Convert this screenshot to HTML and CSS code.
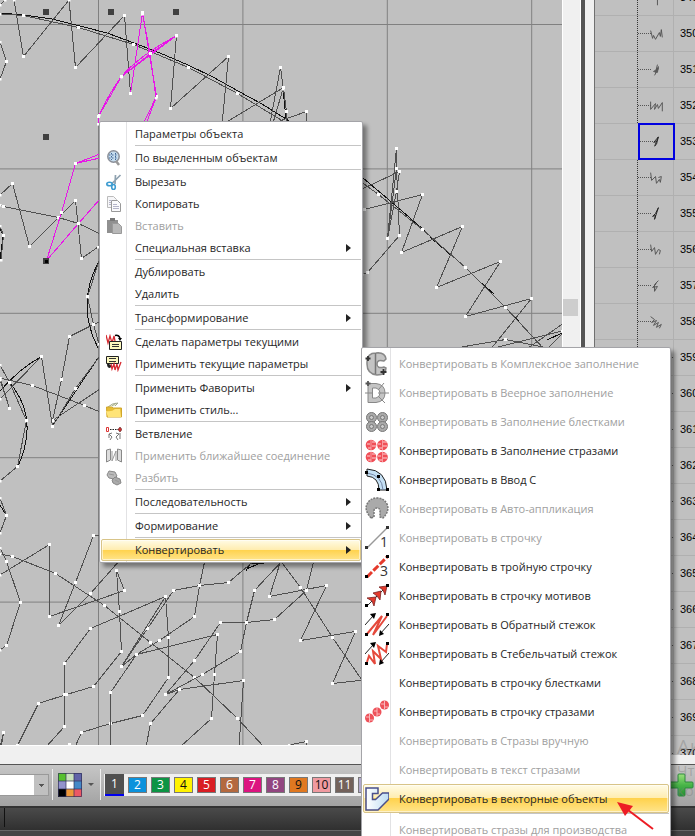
FILE: index.html
```html
<!DOCTYPE html>
<html lang="ru">
<head>
<meta charset="utf-8">
<title>Редактор вышивки</title>
<link rel="stylesheet" href="styles.css">
</head>
<body>
<div class="app">
  <main class="workspace">
    <section class="editor">
      <svg class="canvas" role="img" aria-label="Рабочее поле">
        <defs>
          <marker id="node" markerWidth="3" markerHeight="3" refX="1.5" refY="1.5" markerUnits="userSpaceOnUse"><rect width="3" height="3" fill="#fff"/></marker>
          <pattern id="grid" width="144.4" height="144.4" x="98" y="24" patternUnits="userSpaceOnUse"><path d="M.5 0V145M0 .5H145" stroke="#808080" fill="none"/></pattern>
        </defs>
        <rect width="100%" height="100%" fill="url(#grid)"/>
        <g class="curve">
          <path d="M0 13L24 15L52 19L80 26L107 33L134 43L160 53L188 65L213 77L238 91L262 104L286 119L325 147L363 178L395 205L425 231M430 237L452 256M480 282L494 294M514 316L519 321"/>
          <path d="M286 119L283 88"/>
          <path d="M98 263Q76 305 98 348M53 425L98 358M41 357Q20 368 0 391M10 383Q28 405 27 430Q26 450 18 466M0 505L6 515M0 228L3 236L0 260M246 571L250 564L264 563M247 569L260 563M547 340L562 333"/>
        </g>
        <g class="thread">
          <path d="M0 14L23.5 15.5L78.5 27.5L133.5 44.5L188.5 67.5L237.5 93.5L286 123"/>
          <path d="M0 5L5 0M14 0L23.5 56.5L69 0L75.5 67.5L124.5 15.5L130.5 93.5"/>
          <path d="M0 42L6.5 61.5L0 79"/>
          <path d="M176.5 35.5L170.5 108.5L228.5 56.5L222 125"/>
          <path d="M225 123L283.5 87.5L286.5 111.5M270 123L280.5 67.5L286.5 111.5L286 123M273 123L283 89M277 122L306.5 111.5L306 123"/>
          <path d="M0 195L12.5 183.5L29.5 246.5L58.5 217.5L75.5 200.5L81.5 258.5L98 247"/>
          <path d="M0 205L3.5 206.5L58.5 217.5L78.5 223.5L100 234M0 226L3.5 235.5L1 260"/>
          <path d="M360 181L378.5 194.5L422.5 229.5L465.5 267.5L505.5 307.5L545 350"/>
          <path d="M360 190L399.5 171.5L396.5 191.5L387.5 238.5L396.5 148.5V168.5L387.5 238.5M396.5 168.5L399.5 235.5L367.5 272.5L362 274"/>
          <path d="M360 210L364.5 209.5L422.5 194.5L401.5 252.5L462.5 226.5L436.5 287.5L500.5 261.5L465.5 316.5L531.5 298.5L490 350"/>
          <path d="M450 349L505.5 339.5L548 348M494 348L562 331M528 348L564 323M548 348L564 332"/>
          <path d="M100 258L87.5 296.5L93.5 324.5L99 344M100 322L93.5 324.5L69.5 336.5L61.5 379.5L52.5 420.5L100 389"/>
          <path d="M0 399L41.5 356.5L52.5 426.5L75.5 388.5L100 356"/>
          <path d="M0 378L32.5 385.5L84.5 405.5L100 412M0 365L9.5 382.5L26.5 420.5L17.5 466.5L0 481M0 378L9.5 408.5L0 380"/>
          <path d="M0 498L6.5 515.5L0 533M0 548L6.5 561.5L20.5 602.5L6.5 645.5L0 650"/>
          <path d="M0 575L49.5 544.5V616.5L124.5 590.5L116.5 570.5L119.5 611.5L121.5 651.5L93.5 686.5L66.5 694.5L38.5 703.5L17.5 745.5"/>
          <path d="M0 554L12.5 556.5L55.5 573.5L104.5 605.5L150.5 642.5L194.5 677.5L237.5 718.5L265 748"/>
          <path d="M100 535L93.5 535.5L75.5 582.5L58.5 625.5L90.5 593.5L120 560"/>
          <path d="M205 560L199.5 585.5L194.5 616.5L159.5 640.5L136.5 654.5L121.5 666.5L147.5 628.5L173.5 590.5L199.5 585.5L228.5 582.5L255 560"/>
          <path d="M46 747L64.5 726.5V694.5V663.5L90.5 628.5L165.5 596.5L168.5 637.5V677.5L142.5 715.5L110.5 723.5L81.5 732.5L75 747"/>
          <path d="M110.5 748V692.5L136.5 654.5L217.5 634.5L214.5 674.5L211.5 718.5L180 747M121.5 666.5L165.5 596.5"/>
          <path d="M283 560L254.5 590.5L246.5 622.5L240.5 651.5L202.5 674.5L165.5 694.5L194.5 660.5L220.5 622.5L246.5 622.5L274.5 619.5L306.5 590.5L314 560"/>
          <path d="M165.5 694.5L179.5 689.5L243.5 680.5L239 747M179.5 689.5L150.5 723.5L146 747"/>
          <path d="M281 560L269.5 596.5L326.5 585.5L300.5 640.5L355.5 631.5L332.5 683.5L364 680M280 560L300.5 587.5L332.5 637.5L364 683M306.5 590.5L274.5 619.5M289 745L306.5 741.5V748M0 748L3.5 732.5L1 748M69.5 744.5L71 748"/>
        </g>
        <g class="thread selected">
          <path d="M130.5 93.5L142.5 12.5L156.5 96.5L143 124"/>
          <path d="M146 124L156 98L150 53L142.5 14"/>
          <path d="M98.5 124V116.5L121.5 76.5L176.5 35.5L150.5 53.5L121.5 76.5M99 115Q110 92 121 77Q140 55 176 36"/>
          <path d="M100 154L75.5 163.5L61.5 212.5L46.5 260.5L78.5 223.5L100 199M75.5 163.5L100 158"/>
        </g>
        <path class="handle" d="M43 9h6v6h-6zM108 9h6v6h-6zM173 9h6v6h-6zM43 134h6v6h-6zM43 258h6v6h-6z"/>
        <path d="M45 260h3v3h-3z"/>
      </svg>
      <div class="hscroll"></div>
    </section>
    <div class="vscroll"><span class="thumb"></span></div>
    <div class="splitter"></div>
    <aside class="objects">
      <ol class="object-list">
        <li><span class="pic"><svg viewBox="0 0 36 36"><path d="M17 14l3 4v8"/></svg></span><span class="num">349</span></li>
        <li><span class="pic"><svg viewBox="0 0 36 36"><path d="M13 15l2 8 1-3 2 4 4-7 1 4 1-7 1 8"/></svg></span><span class="num">350</span></li>
        <li><span class="pic"><svg viewBox="0 0 36 36"><path d="M20 13l-2 8 3-6-1 6-4-1 5-3-4 7"/></svg></span><span class="num">351</span></li>
        <li><span class="pic"><svg viewBox="0 0 36 36"><path d="M13 14v8l5-6-1 6 3-5 1 4 4-6v9"/></svg></span><span class="num">352</span></li>
        <li class="current"><span class="pic"><svg viewBox="0 0 36 36"><path class="bold" d="M20 13l-4 10 2-2 2-8-5 6 3-1"/></svg></span><span class="num">353</span></li>
        <li><span class="pic"><svg viewBox="0 0 36 36"><path d="M13 13l1 8 4-4 1 7 3-4 1 3 1-6-3 1"/></svg></span><span class="num">354</span></li>
        <li><span class="pic"><svg viewBox="0 0 36 36"><path class="bold" d="M21 12l-3 6-3 3 3-1-1 4 4-12"/></svg></span><span class="num">355</span></li>
        <li><span class="pic"><svg viewBox="0 0 36 36"><path d="M13 13l1 7 3-4 1 7 3-5 2 1-1 4"/></svg></span><span class="num">356</span></li>
        <li><span class="pic"><svg viewBox="0 0 36 36"><path d="M21 13l-4 4v7l3-5-5 1 4-4"/></svg></span><span class="num">357</span></li>
        <li><span class="pic"><svg viewBox="0 0 36 36"><path d="M13 13l4 3-3 3 5-2-3 5 5-3-2 5 5-3-2 4"/></svg></span><span class="num">358</span></li>
        <li><span class="pic"></span><span class="num">359</span></li>
        <li><span class="pic"></span><span class="num">360</span></li>
        <li><span class="pic"></span><span class="num">361</span></li>
        <li><span class="pic"></span><span class="num">362</span></li>
        <li><span class="pic"></span><span class="num">363</span></li>
        <li><span class="pic"></span><span class="num">364</span></li>
        <li><span class="pic"></span><span class="num">365</span></li>
        <li><span class="pic"></span><span class="num">366</span></li>
        <li><span class="pic"></span><span class="num">367</span></li>
        <li><span class="pic"></span><span class="num">368</span></li>
        <li><span class="pic"></span><span class="num">369</span></li>
        <li><span class="pic"></span><span class="num">370</span></li>
      </ol>
    </aside>
  </main>

  <footer class="toolbar">
    <select class="combo" aria-label="Значение"><option></option></select>
    <button class="palette" aria-label="Палитра">
      <svg width="24" height="24" viewBox="0 0 24 24"><path fill="#56c02e" d="M0 0h8v8H0z"/><path fill="#c9e2bd" d="M8 0h8v8H8z"/><path fill="#6064a8" d="M16 0h8v8h-8z"/><path fill="#9292cc" d="M0 8h8v8H0z"/><path fill="#fff" d="M8 8h8v8H8z"/><path fill="#4488c8" d="M16 8h8v8h-8z"/><path d="M0 16h8v8H0z"/><path fill="#f09838" d="M8 16h8v8H8z"/><path fill="#ec5864" d="M16 16h8v8h-8z"/><path d="M.5.5h23v23H.5zM8 0v24M16 0v24M0 8h24M0 16h24" fill="none" stroke="#303058" stroke-opacity=".7"/></svg>
      <span class="drop"></span>
    </button>
    <div class="swatches">
      <button class="active c1">1</button><button class="c2">2</button><button class="c3">3</button><button class="c4">4</button><button class="c5">5</button><button class="c6">6</button><button class="c7">7</button><button class="c8">8</button><button class="c9">9</button><button class="c10">10</button><button class="c11">11</button><button class="c12">12</button>
    </div>
    <button class="add" aria-label="Добавить">
      <svg width="24" height="24" viewBox="0 0 24 24"><defs><linearGradient id="plus" x2="0" y2="1"><stop stop-color="#9be07c"/><stop offset=".5" stop-color="#49b548"/><stop offset="1" stop-color="#239035"/></linearGradient></defs><path d="M9 1h5q1 0 1 1v7h7q1 0 1 1v4q0 1-1 1h-7v7q0 1-1 1H9q-1 0-1-1v-7H1q-1 0-1-1v-4q0-1 1-1h7V2q0-1 1-1z" fill="url(#plus)" stroke="#2c8a3c"/></svg>
    </button>
  </footer>
  <div class="status"><span class="cell"></span></div>
  <div class="status-edge"></div>

  <div class="watermark"><span class="wm-title">Активация</span><span>Чтобы</span><span>компоненту</span></div>

  <ul class="menu main-menu" role="menu">
    <li><button>Параметры объекта</button></li>
    <li class="sep"></li>
    <li><button><svg viewBox="0 0 16 16"><circle cx="7.500" cy="6.500" r="5.700" fill="#c5dcee" stroke="#8c9099" stroke-width="1.500"/><path d="M10 11l3 4" stroke="#999" stroke-width="2.500"/><path d="M5.500 3v7M9.500 3v7M3 5h9M3 8h9" fill="none" stroke="#426796" stroke-dasharray="1.500 1.500"/></svg>По выделенным объектам</button></li>
    <li class="sep"></li>
    <li><button><svg viewBox="0 0 16 16"><path d="M14.500 1L6 9.500M9.500 1L9 10" stroke="#8fa2b0" stroke-width="1.700"/><ellipse cx="3.500" cy="10" rx="2.700" ry="1.800" fill="none" stroke="#3d9bd0" stroke-width="1.600"/><ellipse cx="7.500" cy="13" rx="1.800" ry="2.500" fill="none" stroke="#3d9bd0" stroke-width="1.600"/></svg>Вырезать</button></li>
    <li><button><svg viewBox="0 0 16 16"><path d="M1.500.5h6l3 3v8h-9z" fill="#f6f6f8" stroke="#bbb"/><path d="M5.500 4.500h6l3 3v8h-9z" fill="#fafafc" stroke="#999"/><path d="M7 8.500h4M7 10.500h6M7 12.500h6M3 4.500h3M3 6.500h2M3 8.500h2" stroke="#b4b4c8"/></svg>Копировать</button></li>
    <li><button disabled><svg viewBox="0 0 16 16"><path d="M1 2h11v13H1z" fill="#909090"/><path d="M4 0h5v3H4z" fill="#777"/><path d="M6.500 5.500h6l3 3v7h-9z" fill="#b8b8b8" stroke="#999"/></svg>Вставить</button></li>
    <li><button class="more">Специальная вставка</button></li>
    <li class="sep"></li>
    <li><button>Дублировать</button></li>
    <li><button>Удалить</button></li>
    <li class="sep"></li>
    <li><button class="more">Трансформирование</button></li>
    <li class="sep"></li>
    <li><button><svg viewBox="0 0 16 16"><path d="M0 1l2 8L4 2l2 7 2-7 1 5" fill="none" stroke="#d62a30" stroke-width="1.300"/><path d="M9 1.500q4-1 5 3" fill="none" stroke="#000" stroke-width="1.500"/><path d="M12 4h4l-2 3z"/><path d="M3.500 7.500h12v8h-12z" fill="#fcf8be" stroke="#222"/><path d="M6 10.500h7M6 12.500h7" stroke="#333"/></svg>Сделать параметры текущими</button></li>
    <li><button><svg viewBox="0 0 16 16"><path d="M.5.500h12v7H.5z" fill="#fcf8be" stroke="#222"/><path d="M3 2.500h7M3 5.500h7" stroke="#333"/><path d="M1 8q0 4 3 4l2-2-3-2z" fill="#222"/><path d="M5 8l1 5 2-5 1 6 2-6 1 6 3-8" fill="none" stroke="#d62a30" stroke-width="1.300"/></svg>Применить текущие параметры</button></li>
    <li class="sep"></li>
    <li><button class="more">Применить Фавориты</button></li>
    <li><button><svg viewBox="0 0 16 16"><path d="M2 5q4-4 10-4l-3 3M6 4l4-3" fill="#ecefd0" stroke="#a4aa92"/><path d="M.5 5h5l2 1h8v9H1z" fill="#e7bd35" stroke="#d0a62c"/><path d="M0 9q6 1 9-2h5l1 8H2z" fill="#ffe477"/></svg>Применить стиль...</button></li>
    <li class="sep"></li>
    <li><button><svg viewBox="0 0 16 16"><path d="M.5 1.500h2v4h-2z" fill="none" stroke="#d33"/><path d="M4 3.500h9" stroke="#222" stroke-dasharray="1.500 1"/><path d="M14 1l2 2.500L14 6l-2-2.500z" fill="#c33" stroke="#522" stroke-width=".6"/><path d="M3 8l3-1M3 8l3 3-2 3M3 8v4M13 8l-3-1M13 8l-3 3 2 3M14 7v6" fill="none" stroke="#777"/></svg>Ветвление</button></li>
    <li><button disabled><svg viewBox="0 0 16 16"><path d="M.5 2l4-1v11l-4 2zM15.500 2l-4-1v11l4 2z" fill="#ddd" stroke="#888"/><path d="M6 3v10L10 3v10" fill="none" stroke="#999"/></svg>Применить ближайшее соединение</button></li>
    <li><button disabled><svg viewBox="0 0 16 16"><path d="M1 5l2-4 6 1 2 4-3 3-5-1z" fill="#bbb" stroke="#888"/><path d="M6 10l3-3 5 2 1 4-4 2-4-2z" fill="#aaa" stroke="#888"/><path d="M3 4l5 1M9 10l4 2" stroke="#999"/></svg>Разбить</button></li>
    <li class="sep"></li>
    <li><button class="more">Последовательность</button></li>
    <li class="sep"></li>
    <li><button class="more">Формирование</button></li>
    <li class="sep"></li>
    <li><button class="more hot">Конвертировать</button></li>
  </ul>

  <ul class="menu sub-menu" role="menu">
    <li><button disabled><svg viewBox="0 0 24 24"><path d="M2 10Q2 1 11 1q9-1 10 6l-2 2q-7-2-7 3t7 3l2 1q0 7-9 7Q2 22 2 12z" fill="#c4c4c4" stroke="#888" stroke-width="1.500"/><path d="M10.500 1v21" stroke="#777" stroke-width="1.500"/><path d="M3 4v5M.5 6.500h5M18.500 17v6M15.500 20h6" stroke="#333" stroke-width="1.800"/></svg>Конвертировать в Комплексное заполнение</button></li>
    <li><button disabled><svg viewBox="0 0 24 24"><path d="M3 2.500h8q9 1 9 9.500t-9 9.500H3zM7.500 7v10H11q4-1 4-5t-4-5z" fill="#c4c4c4" fill-rule="evenodd" stroke="#888"/><path d="M0 12h8M13 12h11M14 8l5-6M14 16l6 6" stroke="#888"/><path d="M3 0v5M.5 2.500h5" stroke="#555" stroke-width="1.800"/></svg>Конвертировать в Веерное заполнение</button></li>
    <li><button disabled><svg viewBox="0 0 24 24"><g fill="#aaa" stroke="#777"><circle cx="6.500" cy="7.500" r="5"/><circle cx="17.500" cy="7.500" r="5"/><circle cx="6.500" cy="16.500" r="5"/><circle cx="17.500" cy="16.500" r="5"/></g><g fill="#ccc" stroke="#777"><circle cx="6.500" cy="7.500" r="2"/><circle cx="17.500" cy="7.500" r="2"/><circle cx="6.500" cy="16.500" r="2"/><circle cx="17.500" cy="16.500" r="2"/></g></svg>Конвертировать в Заполнение блестками</button></li>
    <li><button><svg viewBox="0 0 24 24"><g fill="#f04e56"><circle cx="6" cy="6" r="5.300"/><circle cx="17.500" cy="6" r="5.300"/><circle cx="6" cy="18" r="5.300"/><circle cx="17.500" cy="18" r="5.300"/></g><path d="M2 5h3M7 3h3M7 7h4M3 9h3M13 5h3M18 3h4M18 7h4M14 9h3M2 17h3M7 15h3M7 19h4M3 21h3M13 17h3M18 15h4M18 19h4M14 21h3" stroke="#fbd0d2"/><path d="M6 1v10M17.500 1v10M6 13v10M17.500 13v10" stroke="#f99ca2"/></svg>Конвертировать в Заполнение стразами</button></li>
    <li><button><svg viewBox="0 0 24 24"><path d="M2 1q19 1 20 21h-8Q14 9 2 8z" fill="#c4e0f4" stroke="#222"/><path d="M2 5q15 2 16 17" stroke="#78a" fill="none"/><path d="M0 3h3v3H0zM12 7h3v3h-3zM12 20h3v3h-3zM21 20h3v3h-3z"/></svg>Конвертировать в Ввод C</button></li>
    <li><button disabled><svg viewBox="0 0 24 24"><path d="M6 21Q-1 13 2 7 5 1 12 1t10 6q3 7-4 14l-3-1v-6q0-3-3-3t-3 3v6z" fill="#aaa" stroke="#777" stroke-width="1.500" stroke-dasharray="2 1"/></svg>Конвертировать в Авто-аппликация</button></li>
    <li><button disabled><svg viewBox="0 0 24 24"><path d="M2 22L22 2" stroke="#999" stroke-width="1.500"/><path d="M0 20h3v3H0zM21 0h3v3h-3z" fill="#333"/><text x="15" y="21">1</text></svg>Конвертировать в строчку</button></li>
    <li><button><svg viewBox="0 0 24 24"><path d="M2 22L22 2" stroke="#e53a2c" stroke-width="3" stroke-dasharray="7 2"/><path d="M0 20h3v3H0zM21 0h3v3h-3z"/><text x="15" y="21">3</text></svg>Конвертировать в тройную строчку</button></li>
    <li><button><svg viewBox="0 0 24 24"><path d="M2 22L22 2" stroke="#333"/><path d="M2 14l9-1-2 9-2-5zM8 9l8-2-1 9-3-4zM14 3l8-1-2 9-2-5z" fill="#e53a2c" stroke="#722" stroke-width=".8"/><path d="M0 20h3v3H0zM21 0h3v3h-3z"/></svg>Конвертировать в строчку мотивов</button></li>
    <li><button><svg viewBox="0 0 24 24"><path d="M2 21L17 3 8 22 22 3" fill="none" stroke="#e5493c" stroke-width="2"/><path d="M0 12l8-9M24 11l-9 10" stroke="#222"/><path d="M5 1l6-1-2 6zM14 23l1-6 4 4zM0 20h3v3H0zM21 0h3v3h-3z"/></svg>Конвертировать в Обратный стежок</button></li>
    <li><button><svg viewBox="0 0 24 24"><path d="M2 20l2-6 6 8-2-13 8 8-3-13 8 6 1-8" fill="none" stroke="#e5493c" stroke-width="2"/><path d="M0 12l8-9M24 11l-9 10" stroke="#222"/><path d="M5 1l6-1-2 6zM14 23l1-6 4 4zM0 20h3v3H0zM21 0h3v3h-3z"/></svg>Конвертировать в Стебельчатый стежок</button></li>
    <li><button>Конвертировать в строчку блестками</button></li>
    <li><button><svg viewBox="0 0 24 24"><g fill="#ee5159"><circle cx="4.500" cy="18" r="4.500"/><circle cx="12" cy="12" r="4.500"/><circle cx="19.500" cy="5" r="4.500"/></g><path d="M1 17h3M5 20h3M9 11h3M12 14h3M16 4h3M20 7h3M4.500 14v8M12 8v8M19.500 1v8" stroke="#f9b8bb"/></svg>Конвертировать в строчку стразами</button></li>
    <li><button disabled>Конвертировать в Стразы вручную</button></li>
    <li><button disabled>Конвертировать в текст стразами</button></li>
    <li><button class="hot"><svg viewBox="0 0 24 24"><defs><linearGradient id="shape"><stop stop-color="#fff"/><stop offset="1" stop-color="#bddcf2"/></linearGradient></defs><path d="M1 1h12v5.500H7.500v6h3l7-6.500H24v6L13 23H1z" fill="url(#shape)" stroke="#4a4f8c" stroke-width="1.500"/></svg>Конвертировать в векторные объекты</button></li>
    <li class="sep"></li>
    <li><button disabled>Конвертировать стразы для производства</button></li>
  </ul>

  <svg class="pointer" viewBox="0 0 38 30"><path d="M11 9l25 19" stroke="#ed1c24" stroke-width="2"/><path d="M0 1l16 4-8 10z" fill="#ed1c24"/></svg>
</div>
</body>
</html>
```
FILE: styles.css
```css
* { box-sizing: border-box; }
body { margin: 0; font: 11px/16px "Open Sans", "Noto Sans", sans-serif; color: #262626; }
button { font: inherit; color: inherit; border: 0; padding: 0; background: none; }
ul, ol { list-style: none; margin: 0; padding: 0; }

.app { position: relative; height: 100vh; overflow: hidden; display: flex; flex-direction: column; }
.workspace { flex: 1; min-height: 0; display: grid; grid-template-columns: 1fr 19px 14px 100px; background: #f0f0f0; border-bottom: 1px solid #555; }
.editor { min-width: 0; min-height: 0; display: flex; flex-direction: column; }
.canvas { flex: 1; min-height: 0; width: 100%; background: #c0c0c0; display: block; }
.hscroll { height: 19px; border-top: 1px solid #fff; background: #f0f0f0; }
.curve { fill: none; stroke: #111; shape-rendering: crispEdges; }
.thread { fill: none; stroke: #505050; shape-rendering: crispEdges; }
.thread path { marker: url(#node); }
.selected { stroke: #e815e8; }
.handle { fill: #404040; }
.vscroll { border: solid #fff; border-width: 0 1px; padding-top: 299px; }
.thumb { display: block; width: 15px; height: 17px; background: #cdcdcd; }
.splitter { border-left: 4px solid #555; border-right: 1px solid #707070; background: #f0f0f0; }

.objects { overflow: hidden; margin-bottom: 9px; background: #c0c0c0; min-height: 0; }
.object-list { margin-top: -20px; }
.object-list li { display: grid; grid-template-columns: 42px 37px 1fr; height: 36px; border-bottom: 1px solid #b0b0b0; color: #000; font: 11px/35px "Liberation Sans", sans-serif; }
.pic { grid-column: 2; border-left: 1px dotted #333; border-right: 1px solid #b0b0b0; background: linear-gradient(90deg, #555 50%, transparent 0) 0 17px / 2px 1px repeat-x; }
.pic svg { display: block; width: 35px; height: 35px; fill: none; stroke: #555; background: linear-gradient(#c0c0c0, #c0c0c0) 14px 0 / 21px 35px no-repeat; }
.pic .bold { stroke: #222; }
.current .pic { outline: 2px solid #0000e0; outline-offset: -1px; margin-left: 2px; }
.current .pic svg { width: 33px; }
.num { padding-left: 6px; }

.toolbar { display: flex; align-items: center; height: 41px; padding-bottom: 2px; background: linear-gradient(#c6c6c6, #a2a2a2); }
.combo { appearance: none; width: 49px; height: 22px; margin: 0; border: 1px solid #999; border-left: 0; border-radius: 0; background: linear-gradient(#555, #555) 39px 9px / 5px 1px no-repeat, linear-gradient(#555, #555) 40px 10px / 3px 1px no-repeat, linear-gradient(#555, #555) 41px 11px / 1px 1px no-repeat, linear-gradient(90deg, #fff 34px, #c0c0c0 0); }
.palette { display: flex; align-items: center; gap: 6px; height: 31px; margin-left: 3px; padding-left: 5px; padding-right: 6px; border-left: 1px solid #eee; border-right: 1px solid #eee; }
.drop { width: 0; border: 3px solid transparent; border-top-color: #555; border-bottom: 0; }
.swatches { display: flex; align-items: center; gap: 4px; height: 22px; margin-left: 3px; padding: 0 1px; background: #f0f0f0; flex: 1; min-width: 0; overflow: hidden; }
.swatches button { flex: none; width: 19px; height: 16px; border: 1px solid #777; font: 12px/14px "Open Sans", sans-serif; color: #fff; }
.swatches .active { height: 22px; border: solid #0000f0; border-width: 0 0 2px; }
.c1 { background: #505050; } .c2 { background: #0c92dc; } .c3 { background: #0c9444; } .c4 { background: #fff200; }
.c5 { background: #d91e24; } .c6 { background: #b4693f; } .c7 { background: #dc1480; } .c8 { background: #924680; }
.c9 { background: #e07820; } .c10 { background: #f09aa0; } .c11 { background: #73625b; } .c12 { background: #b0a8cc; }
.swatches .c4, .swatches .c9, .swatches .c10 { color: #111; }
.add { display: flex; width: 25px; height: 24px; }
.status { height: 24px; border-top: 2px solid #333; background: linear-gradient(#4a4a4a, #303030); }
.cell { display: block; width: 5px; height: 19px; border-right: 1px solid #111; }
.status-edge { height: 6px; border-top: 1px solid #666; background: #444; }
.watermark { position: absolute; left: 677px; bottom: 36px; display: flex; flex-direction: column; font: 15px/20px "Open Sans", sans-serif; color: #80808070; }
.wm-title { font-size: 20px; line-height: 26px; }

.menu { position: absolute; background: #fff; border: 1px solid #a4a4a8; border-radius: 2px; padding: 1px; box-shadow: 4px 4px 4px #0006; }
.menu button { position: relative; display: flex; align-items: center; width: 100%; height: 22px; padding-left: 33px; text-align: left; white-space: nowrap; border: 1px solid transparent; }
.menu button:disabled { color: #a0a0a0; }
.menu svg { position: absolute; left: 4px; width: 16px; height: 16px; }
.menu .sep { height: 2px; margin-left: 34px; border-top: 1px solid #c5c5c5; }
.menu .hot { border-color: #d8c488; border-radius: 2px; background: linear-gradient(#fffbe6, #ffedb0 48%, #ffd24d 50%, #ffe48a); box-shadow: inset 0 0 0 1px #fff8; }
.more::after { content: ""; margin-left: auto; margin-right: 9px; border: 4px solid transparent; border-left: 5px solid #222; border-right: 0; }
.main-menu { left: 99px; top: 121px; width: 264px; background: linear-gradient(90deg, transparent 26px, #e2e2e4 26px 27px, transparent 0), #fff; }
.sub-menu { left: 361px; top: 347px; width: 310px; background: linear-gradient(90deg, transparent 28px, #e2e2e4 28px 29px, transparent 0), #fff; }
.sub-menu button { height: 29px; padding-left: 35px; }
.sub-menu svg { left: 1px; width: 24px; height: 24px; }
.sub-menu .sep { margin-left: 36px; }
.menu text { font: 14px "Open Sans", sans-serif; fill: #333; }
.pointer { position: absolute; left: 617px; top: 801px; width: 38px; height: 30px; }
```
